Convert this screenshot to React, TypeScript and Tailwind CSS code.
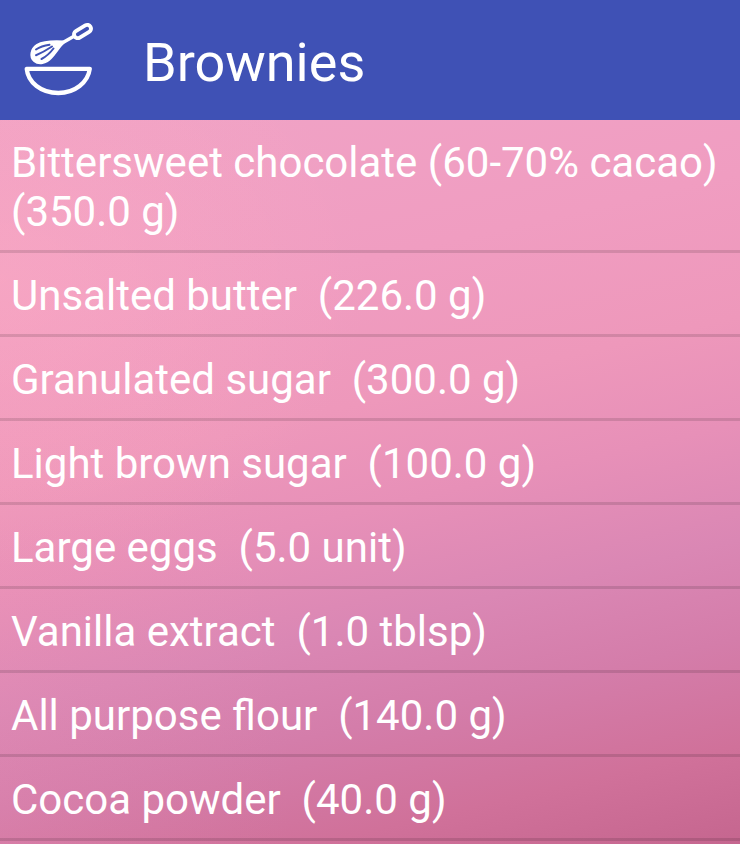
const ingredients = [
  "Bittersweet chocolate (60-70% cacao)  (350.0 g)",
  "Unsalted butter  (226.0 g)",
  "Granulated sugar  (300.0 g)",
  "Light brown sugar  (100.0 g)",
  "Large eggs  (5.0 unit)",
  "Vanilla extract  (1.0 tblsp)",
  "All purpose flour  (140.0 g)",
  "Cocoa powder  (40.0 g)",
];

function WhiskBowlIcon() {
  return (
    <svg
      className="h-[100px] w-[100px] shrink-0"
      viewBox="0 0 100 100"
      fill="none"
      stroke="white"
      strokeLinecap="round"
      strokeLinejoin="round"
      aria-hidden="true"
    >
      {/* handle */}
      <rect x="63.2" y="17.7" width="18.6" height="7.6" rx="3.8" strokeWidth="3.9" transform="rotate(-31 72.5 21.5)" />
      <path d="M63.5 26.5 L52.5 32.8" strokeWidth="3.4" />
      {/* whisk head */}
      <path
        d="M53 32.2 C43 31.7 33 32.2 27.5 35.5 C21.5 39.5 20.5 46.5 24.5 50.3 C29 54 35.5 52.7 40.5 47.5 C45.5 42.5 48 37 53 32.2Z"
        fill="white"
        strokeWidth="3.5"
      />
      {/* gaps between the wires */}
      <g stroke="#3f51b5" strokeWidth="2">
        <path d="M26 39.5 C30 36.8 35 35.4 39.5 34.8" />
        <path d="M26 45.2 C32 42.8 37.5 39.5 42 36.5" />
        <path d="M31.5 49 C36.5 46.5 40 43 43.5 38.5" />
      </g>
      {/* bowl */}
      <path d="M16.7 58.8 H79.8 C78 72.5 65 83 48.3 83 C31 83 18 72.5 16.7 58.8Z" strokeWidth="4.3" />
    </svg>
  );
}

export default function App() {
  return (
    <div className="flex h-[844px] w-full flex-col overflow-hidden font-[Roboto,sans-serif] text-white">
      <header className="flex h-[120px] shrink-0 items-center bg-[#3f51b5] pl-[10px]">
        <WhiskBowlIcon />
        <h1 className="ml-[33px] pt-[5px] text-[54px] leading-[64px]">Brownies</h1>
      </header>
      <ul className="flex-1 bg-[radial-gradient(ellipse_50%_40%_at_0%_22%,rgba(255,176,198,0.4)_0%,rgba(255,176,198,0)_100%),linear-gradient(90deg,rgba(245,150,180,0.12)_0%,rgba(245,150,180,0)_40%),linear-gradient(167deg,#f0a3c6_0%,#f09dc1_25%,#ee98bb_41%,#e790b8_53%,#da87b4_66%,#d47daa_77%,#d0719a_89%,#c5668f_100%)]">
        {ingredients.map((item) => (
          <li
            key={item}
            className="whitespace-pre-wrap border-b-[3px] border-black/12 pt-[18px] pr-3 pb-[14px] pl-[11px] text-[42px] leading-[49px]"
          >
            {item}
          </li>
        ))}
      </ul>
    </div>
  );
}
